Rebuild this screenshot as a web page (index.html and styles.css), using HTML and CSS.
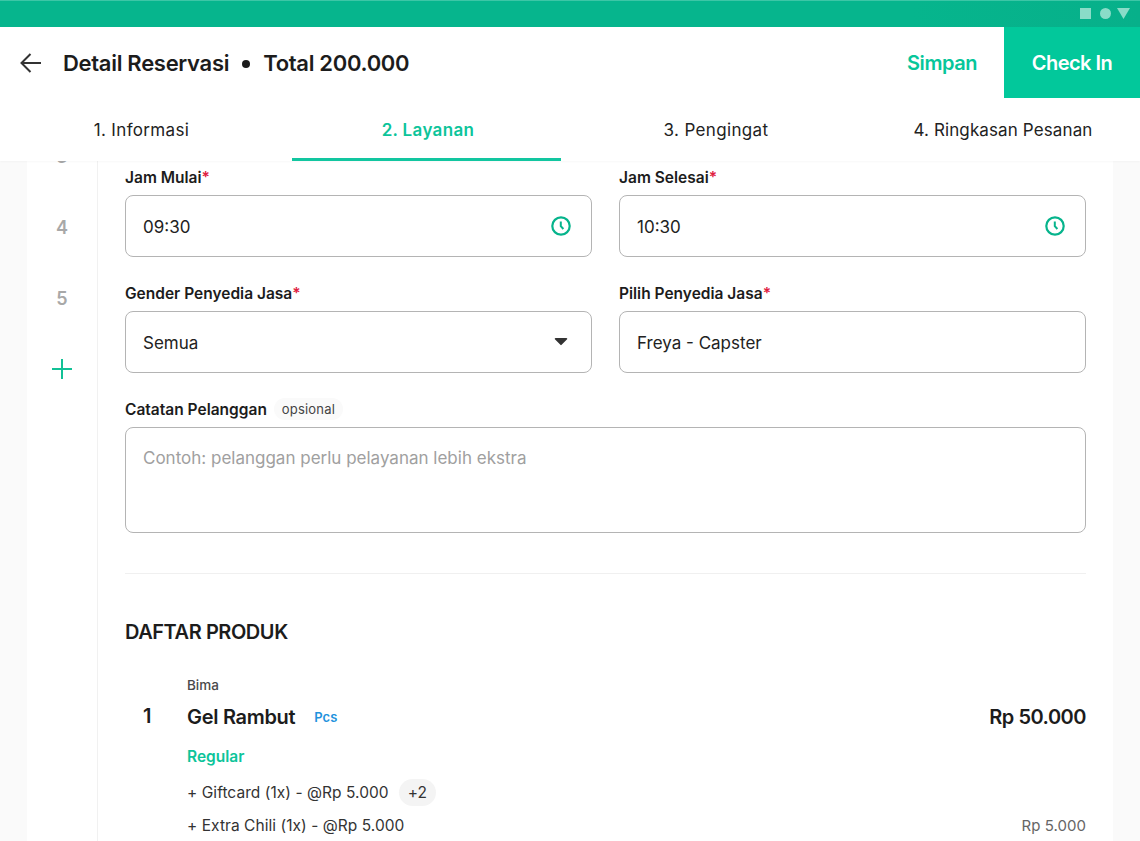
FILE: index.html
```html
<!DOCTYPE html>
<html lang="id">
<head>
<meta charset="utf-8">
<title>Detail Reservasi</title>
<link rel="stylesheet" href="styles.css">
</head>
<body>
<div class="page">
  <div class="statusbar">
    <span class="st-square"></span>
    <span class="st-circle"></span>
    <svg class="st-tri" width="13" height="11" viewBox="0 0 13 11"><path d="M0 0h13L6.500 11z"/></svg>
  </div>
  <header class="topbar">
    <svg class="back" width="22" height="20" viewBox="0 0 22 20" fill="none"><path d="M21 10H2M10.500 1 1.500 10l9 9" stroke="#333" stroke-width="2"/></svg>
    <h1 class="title"><span>Detail Reservasi</span><span class="dot"></span><span>Total 200.000</span></h1>
    <button class="btn-save">Simpan</button>
    <button class="btn-checkin">Check In</button>
  </header>
  <nav class="tabs">
    <a class="tab tab-1">1. Informasi</a>
    <a class="tab tab-active">2. Layanan</a>
    <a class="tab">3. Pengingat</a>
    <a class="tab tab-4">4. Ringkasan Pesanan</a>
  </nav>
  <div class="body">
    <aside class="steps">
      <div class="step">3</div>
      <div class="step">4</div>
      <div class="step">5</div>
      <div class="step step-add">
        <svg width="22" height="22" viewBox="0 0 22 22" fill="none"><path d="M11 1v20M1 11h20" stroke="#12c196" stroke-width="2"/></svg>
      </div>
    </aside>
    <main class="main">
      <div class="form-grid">
        <div class="field">
          <label class="label">Jam Mulai<em>*</em></label>
          <div class="input"><span>09:30</span>
            <svg class="clock" width="22" height="22" viewBox="0 0 22 22" fill="none"><circle cx="11" cy="11" r="8.700" stroke="#06b48c" stroke-width="2.200"/><path d="M10.800 6.500v4.700l2.600 2.800" stroke="#06b48c" stroke-width="2"/></svg>
          </div>
        </div>
        <div class="field">
          <label class="label">Jam Selesai<em>*</em></label>
          <div class="input"><span>10:30</span>
            <svg class="clock" width="22" height="22" viewBox="0 0 22 22" fill="none"><circle cx="11" cy="11" r="8.700" stroke="#06b48c" stroke-width="2.200"/><path d="M10.800 6.500v4.700l2.600 2.800" stroke="#06b48c" stroke-width="2"/></svg>
          </div>
        </div>
        <div class="field">
          <label class="label">Gender Penyedia Jasa<em>*</em></label>
          <div class="input"><span>Semua</span>
            <svg class="caret" width="14" height="9" viewBox="0 0 14 9"><path d="M1.500 1h11a.8.8 0 0 1 .6 1.300L7.600 7.800a.8.8 0 0 1-1.200 0L.9 2.300A.8.8 0 0 1 1.500 1z" fill="#333"/></svg>
          </div>
        </div>
        <div class="field">
          <label class="label">Pilih Penyedia Jasa<em>*</em></label>
          <div class="input"><span>Freya - Capster</span></div>
        </div>
        <div class="field field-wide">
          <label class="label">Catatan Pelanggan <span class="optional">opsional</span></label>
          <div class="textarea">Contoh: pelanggan perlu pelayanan lebih ekstra</div>
        </div>
      </div>
      <hr class="divider">
      <h2 class="section-title">DAFTAR PRODUK</h2>
      <div class="product">
        <div class="p-no">1</div>
        <div class="p-info">
          <div class="p-brand">Bima</div>
          <div class="p-name-row">
            <span class="p-name">Gel Rambut</span>
            <span class="p-unit">Pcs</span>
            <span class="p-price">Rp 50.000</span>
          </div>
          <div class="p-variant">Regular</div>
          <div class="p-addon"><span>+ Giftcard (1x) - @Rp 5.000</span><span class="chip">+2</span></div>
          <div class="p-addon p-addon-2"><span>+ Extra Chili (1x) - @Rp 5.000</span><span class="addon-price">Rp 5.000</span></div>
        </div>
      </div>
    </main>
  </div>
</div>
</body>
</html>
```
FILE: styles.css
```css
* { box-sizing: border-box; }
html, body { margin: 0; padding: 0; height: 100%; }
body { font-family: Inter, "Noto Sans", sans-serif; color: #1c1c1c; background: #fafafa; overflow: hidden; }
.page { width: 1140px; height: 841px; display: flex; flex-direction: column; overflow: hidden; }

.statusbar { height: 27px; flex: none; background: linear-gradient(90deg, #06b58d 0%, #06b58d 80%, #07b08a 100%); border-top: 1px solid #3cc6a6; display: flex; align-items: center; justify-content: flex-end; gap: 9px; padding: 0 10px 1px 0; position: relative; z-index: 3; }
.st-square { width: 11px; height: 11px; background: #8adcc8; }
.st-circle { width: 11px; height: 11px; border-radius: 50%; background: #8adcc8; }
.st-tri { fill: #8adcc8; margin-left: -3px; }

.topbar { height: 71px; flex: none; background: #fff; display: flex; align-items: center; position: relative; z-index: 3; }
.back { margin-left: 20px; margin-right: 21px; flex: none; }
.title { margin: 0; font-size: 22px; font-weight: 600; display: flex; align-items: center; flex: 1; letter-spacing: -0.3px; color: #1c1c1c; }
.dot { width: 8px; height: 8px; border-radius: 50%; background: #1c1c1c; margin: 2px 13px 0 13px; }
.btn-save { border: 0; background: none; font: 600 20px Inter, sans-serif; letter-spacing: -0.45px; color: #06c69a; padding: 0; margin-right: 27px; }
.btn-checkin { border: 0; background: #02c89b; color: #fff; font: 600 20px Inter, sans-serif; letter-spacing: -0.5px; width: 136px; height: 71px; padding: 0; }

.tabs { height: 63px; flex: none; background: #fff; display: grid; grid-template-columns: 292px 269px 310px 269px; position: relative; z-index: 2; box-shadow: 0 1px 2px rgba(0,0,0,.03); }
.tab { display: flex; align-items: center; justify-content: center; font-size: 17px; letter-spacing: .35px; color: #222; }
.tab-1 { padding-right: 9px; }
.tab-4 { padding-right: 5px; letter-spacing: .12px; }
.tab-active { color: #0cc49a; font-weight: 600; padding-left: 3px; border-bottom: 3px solid #12c6a0; padding-top: 3px; }

.body { flex: 1; display: flex; padding-left: 27px; width: 1113px; min-height: 0; }
.steps { width: 71px; flex: none; background: #fff; border-right: 1px solid #f1f1f1; margin-top: -41px; }
.step { height: 71px; display: flex; align-items: center; justify-content: center; font-size: 18px; font-weight: 600; color: #a8a8a8; padding-top: 1px; }
.step-add { padding: 0 1px 0 0; }
.main { flex: 1; background: #fff; padding: 5px 27px 0; min-width: 0; }

.form-grid { display: grid; grid-template-columns: 467px 467px; column-gap: 27px; row-gap: 25px; }
.field-wide { grid-column: 1 / 3; }
.label { display: flex; align-items: center; height: 22px; margin-bottom: 7px; font-size: 15.500px; font-weight: 600; color: #1c1c1c; white-space: pre; }
.label em { color: #e0213f; font-style: normal; }
.optional { margin-left: 3px; font-size: 13px; font-weight: 400; color: #444; background: #fafafa; padding: 3px 8px; border-radius: 11px; letter-spacing: .2px; }
.input { height: 62px; border: 1px solid #b4b4b4; border-radius: 8px; padding: 1px 19px 0 17px; display: flex; align-items: center; justify-content: space-between; font-size: 17px; color: #222; background: #fff; }
.clock { margin-top: -1px; }
.caret { margin-right: 4px; margin-top: -2px; }
.textarea { height: 106px; border: 1px solid #b4b4b4; border-radius: 8px; padding: 19px 17px; font-size: 17px; line-height: 22px; color: #a0a0a0; }

.divider { border: 0; border-top: 1px solid #f0f0f0; margin: 40px 0 0; }
.section-title { margin: 46px 0 0; font-size: 20px; line-height: 24px; font-weight: 600; letter-spacing: -0.45px; color: #1c1c1c; }

.product { display: flex; margin-top: 32px; }
.p-no { width: 62px; flex: none; font-size: 20px; font-weight: 600; padding: 28px 0 0 18px; line-height: 24px; }
.p-info { flex: 1; min-width: 0; }
.p-brand { font-size: 13.500px; line-height: 18px; font-weight: 500; color: #4a4a4a; }
.p-name-row { display: flex; align-items: center; margin-top: 9px; height: 28px; }
.p-name { font-size: 20px; font-weight: 600; letter-spacing: -0.3px; }
.p-unit { font-size: 13px; font-weight: 600; color: #1f93dd; margin: 0 0 1px 19px; }
.p-price { margin-left: auto; font-size: 20px; font-weight: 600; letter-spacing: -0.5px; }
.p-variant { margin-top: 14px; height: 24px; line-height: 24px; font-size: 15.500px; font-weight: 600; color: #0cc49a; }
.p-addon { display: flex; align-items: center; margin-top: 9px; height: 28px; font-size: 15.500px; color: #333; letter-spacing: .05px; }
.p-addon-2 { margin-top: 5px; justify-content: space-between; }
.chip { margin-left: 10px; height: 27px; line-height: 27px; padding: 0 9px; border-radius: 14px; background: #f4f4f4; }
.addon-price { color: #666; font-size: 15px; }
```
